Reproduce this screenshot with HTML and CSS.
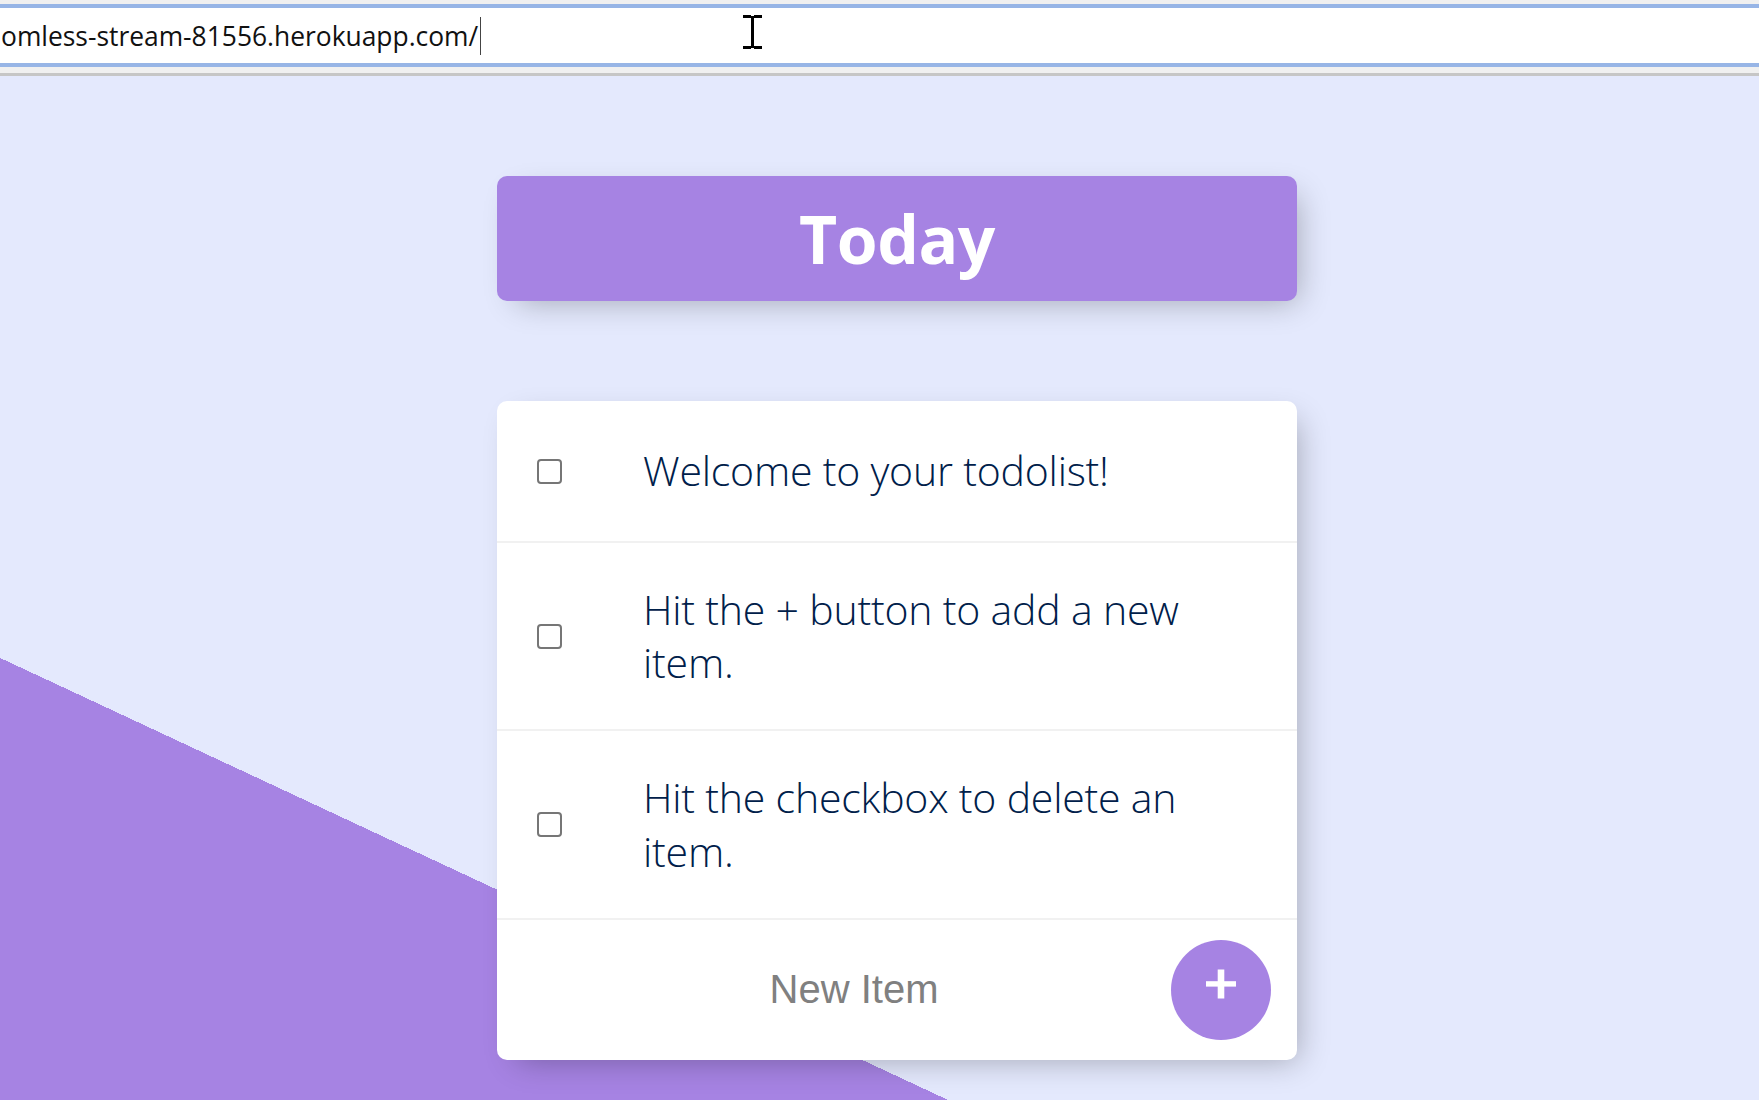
FILE: index.html
```html
<!DOCTYPE html>
<html lang="en">
<head>
<meta charset="utf-8">
<title>To-Do List</title>
<link rel="stylesheet" href="styles.css">
</head>
<body>
<header class="chrome">
  <div class="urlbar">
    <span class="url">omless-stream-81556.herokuapp.com/</span><span class="caret"></span>
  </div>
  <svg class="ibeam" width="20" height="34" viewBox="0 0 20 34" aria-hidden="true">
    <rect x="0" y="0" width="8" height="3" fill="#000"/>
    <rect x="11" y="0" width="8" height="3" fill="#000"/>
    <rect x="8" y="1" width="3" height="32" fill="#000"/>
    <rect x="0" y="31" width="8" height="3" fill="#000"/>
    <rect x="11" y="31" width="8" height="3" fill="#000"/>
  </svg>
</header>
<main class="page">
  <div class="box heading">
    <h1>Today</h1>
  </div>
  <div class="box list">
    <div class="item">
      <input type="checkbox" class="check">
      <p>Welcome to your todolist!</p>
    </div>
    <div class="item">
      <input type="checkbox" class="check">
      <p>Hit the + button to add a new item.</p>
    </div>
    <div class="item">
      <input type="checkbox" class="check">
      <p>Hit the checkbox to delete an item.</p>
    </div>
    <form class="item new-item" action="/" method="post">
      <input type="text" class="new-text" name="newItem" placeholder="New Item" autocomplete="off">
      <button type="submit" class="add" aria-label="Add">
        <svg width="30" height="30" viewBox="0 0 30 30" aria-hidden="true">
          <rect x="0" y="12.2" width="30" height="5.4" fill="#fff"/>
          <rect x="11.7" y="0.5" width="6.6" height="29" fill="#fff"/>
        </svg>
      </button>
    </form>
  </div>
</main>
</body>
</html>
```

FILE: styles.css
```css
* {
  box-sizing: border-box;
}

html,
body {
  margin: 0;
  height: 1100px;
  overflow: hidden;
}

body {
  display: flex;
  flex-direction: column;
  font-family: "Open Sans", "Noto Sans", sans-serif;
  background: #e4e9fd;
}

/* browser address bar */
.chrome {
  position: relative;
  height: 76px;
  flex: none;
  background: #f0f0f0;
  padding-top: 4px;
  border-bottom: 3px solid #c6c6c6;
}

.urlbar {
  height: 63px;
  background: #fff;
  border-top: 4px solid #97b5e6;
  border-bottom: 4px solid #97b5e6;
  display: flex;
  align-items: center;
  padding-left: 1px;
}

.url {
  font-family: "Open Sans", "Noto Sans", sans-serif;
  font-size: 26.4px;
  color: #111;
  white-space: nowrap;
}

.caret {
  width: 1px;
  height: 38px;
  background: #444;
  margin-left: 2px;
}

.ibeam {
  position: absolute;
  left: 743px;
  top: 15px;
}

/* page */
.page {
  flex: 1;
  display: flex;
  flex-direction: column;
  align-items: center;
  gap: 100px;
  padding: 100px 0 0 35px;
  background-color: #e4e9fd;
  background-image: linear-gradient(25deg, #a683e3 50%, #e4e9fd 50%);
  background-size: 1759px 1984px;
  background-repeat: no-repeat;
}

.box {
  width: 800px;
  border-radius: 10px;
  background: #fff;
  box-shadow: 10px 10px 30px -10px rgba(0, 0, 0, 0.3);
}

.heading {
  background: #a683e3;
  text-align: center;
}

.heading h1 {
  margin: 0;
  padding: 20px;
  font-family: "Open Sans", "Noto Sans", sans-serif;
  font-weight: 700;
  font-size: 66px;
  line-height: 85px;
  color: #fff;
  letter-spacing: -0.5px;
}

.item {
  box-sizing: content-box;
  min-height: 140px;
  display: flex;
  align-items: center;
  border-bottom: 2px solid #f1f1f1;
}

.item:last-child {
  border-bottom: 0;
}

.check {
  appearance: none;
  -webkit-appearance: none;
  flex: none;
  width: 25px;
  height: 25px;
  margin: 40px 41px 40px 40px;
  border: 2px solid #767676;
  border-radius: 4px;
  background: #fff;
}

.item p {
  margin: 0;
  padding: 40px;
  font-family: "Open Sans", "Noto Sans", sans-serif;
  font-size: 41px;
  font-weight: 300;
  line-height: 53.2px;
  color: #00204a;
  letter-spacing: -0.2px;
}

.new-item {
  margin-left: 40px;
  text-align: center;
}

.new-text {
  width: 634px;
  height: 124px;
  padding: 2px 4px;
  border: none;
  background: transparent;
  text-align: center;
  font-family: "Liberation Sans", Arial, sans-serif;
  font-size: 40px;
  outline: none;
}

.new-text::placeholder {
  color: #808080;
  opacity: 1;
}

.add {
  flex: none;
  width: 100px;
  height: 100px;
  border-radius: 50%;
  border: 0;
  padding: 0 0 11px;
  background: #a683e3;
  display: flex;
  align-items: center;
  justify-content: center;
}
```
